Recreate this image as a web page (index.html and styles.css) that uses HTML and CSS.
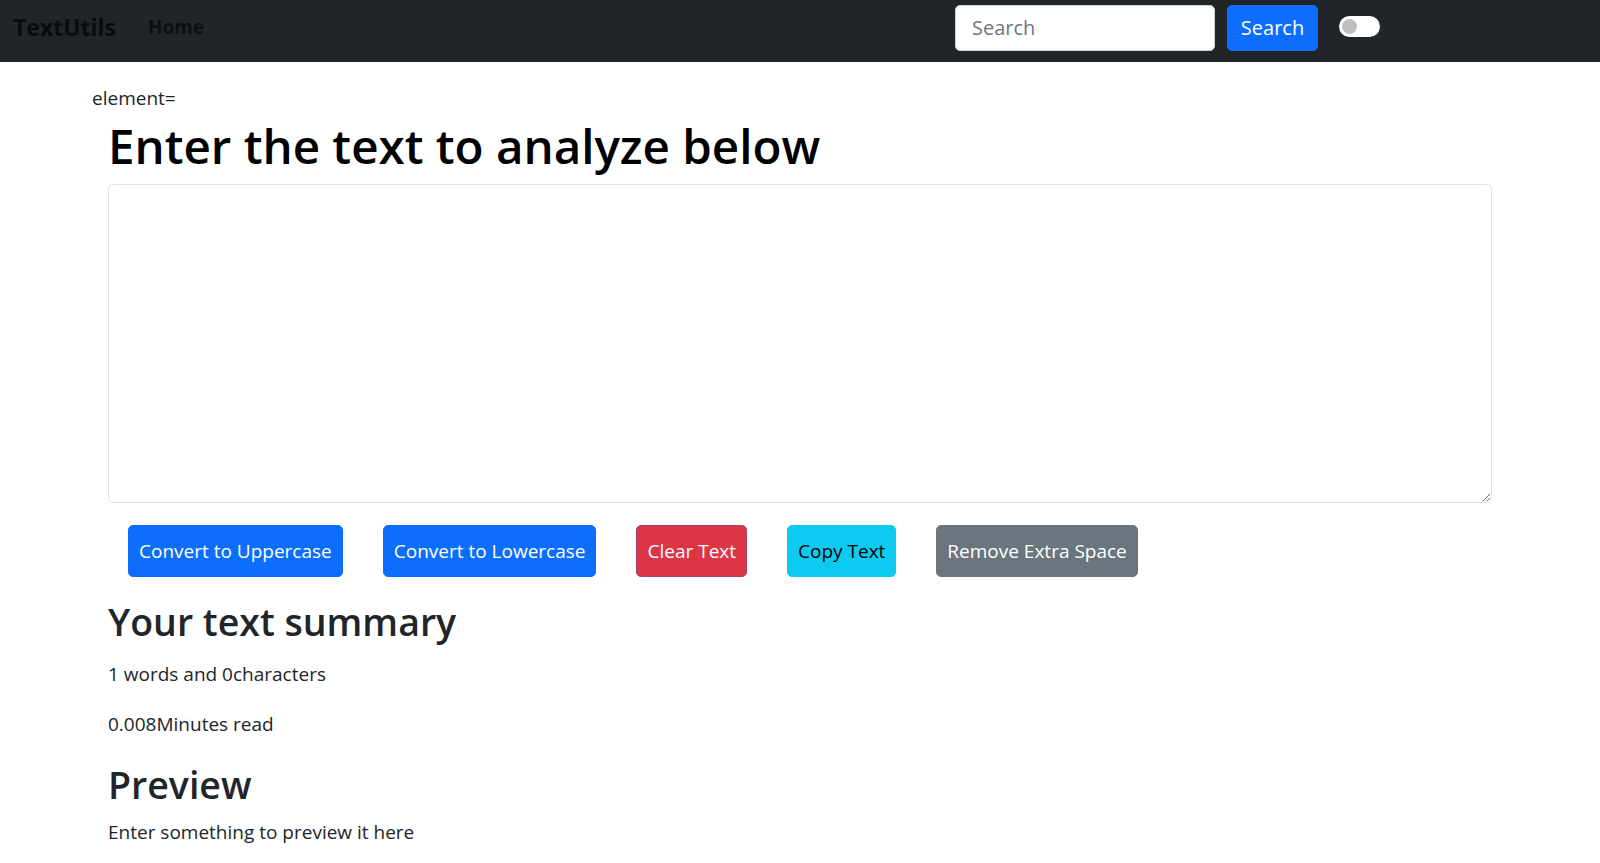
FILE: index.html
```html
<!DOCTYPE html>
<html lang="en">
<head>
    <meta charset="UTF-8">
    <meta name="viewport" content="width=device-width, initial-scale=1.0">
    <title>TextUtils</title>
    <link rel="stylesheet" href="styles.css">
</head>
<body>
    <nav class="navbar">
        <a class="brand" href="#">TextUtils</a>
        <a class="nav-link" href="#">Home</a>
        <div class="nav-right">
            <form class="search">
                <input type="search" placeholder="Search">
                <button type="button" class="btn btn-primary">Search</button>
            </form>
            <div class="switch"><span class="knob"></span></div>
        </div>
    </nav>
    <main class="container">
        <p class="element">element=</p>
        <h1>Enter the text to analyze below</h1>
        <textarea id="myBox" rows="8"></textarea>
        <div class="actions">
            <button class="btn btn-primary">Convert to Uppercase</button>
            <button class="btn btn-primary">Convert to Lowercase</button>
            <button class="btn btn-danger">Clear Text</button>
            <button class="btn btn-info">Copy Text</button>
            <button class="btn btn-secondary">Remove Extra Space</button>
        </div>
        <h2 class="summary-title">Your text summary</h2>
        <p class="count">1 words and 0characters</p>
        <p class="count">0.008Minutes read</p>
        <h2 class="preview-title">Preview</h2>
        <p class="count">Enter something to preview it here</p>
    </main>
</body>
</html>
```

FILE: styles.css
```css
body {
    margin: 0;
    font-family: "Open Sans", "Noto Sans", sans-serif;
    font-size: 19px;
    line-height: 1.5;
    color: #212529;
    background: #fff;
}
.navbar {
    display: flex;
    align-items: center;
    height: 62px;
    padding: 0 13px 7px;
    background-color: #212529;
    box-sizing: border-box;
}
.brand {
    font-size: 23px;
    font-weight: 700;
    color: #0b0b0b;
    text-decoration: none;
    margin-right: 32px;
}
.nav-link {
    font-size: 19px;
    font-weight: 700;
    color: #0e0e0e;
    text-decoration: none;
}
.nav-right {
    display: flex;
    align-items: center;
    margin-left: auto;
    margin-right: 207px;
}
.search {
    display: flex;
    gap: 12px;
    margin: 0;
}
.search input {
    width: 260px;
    height: 46px;
    box-sizing: border-box;
    padding: 0 16px;
    border: 1px solid #ced4da;
    border-radius: 5px;
    font-family: inherit;
    font-size: 20px;
    color: #212529;
}
.search input::placeholder {
    color: #6c757d;
}
.search .btn {
    width: 91px;
    height: 46px;
    margin: 0;
    padding: 0;
    font-size: 20px;
}
.switch {
    width: 41px;
    height: 21px;
    margin-left: 21px;
    background: #fff;
    border-radius: 11px;
    display: flex;
    align-items: center;
    padding-left: 3px;
    box-sizing: border-box;
    margin-top: -2px;
}
.knob {
    width: 15px;
    height: 15px;
    border-radius: 50%;
    background: #bfbfbf;
}
.container {
    width: 1384px;
    margin: 0 auto;
}
.element {
    margin: 22px 0 0 -16px;
    font-size: 19px;
}
h1 {
    margin: 2px 0 7px;
    font-size: 47.5px;
    font-weight: 600;
    line-height: 62px;
    color: #000;
}
textarea {
    display: block;
    width: 100%;
    height: 319px;
    box-sizing: border-box;
    border: 1px solid #dee2e6;
    border-radius: 5px;
    padding: 8px 15px;
    font-family: inherit;
    font-size: 19px;
}
.actions {
    display: flex;
    margin-top: 22px;
}
.btn {
    height: 52px;
    margin: 0 20px;
    padding: 0 10px;
    border: 1px solid transparent;
    border-radius: 5px;
    font-family: inherit;
    font-size: 19px;
    cursor: pointer;
    color: #fff;
}
.btn-primary {
    background-color: #0d6efd;
    border-color: #0d6efd;
}
.btn-danger {
    background-color: #dc3545;
    border-color: #a5407a;
}
.btn-info {
    background-color: #0dcaf0;
    border-color: #0dcaf0;
    color: #000;
}
.btn-secondary {
    background-color: #6c757d;
    border-color: #6c757d;
}
h2 {
    font-size: 37.5px;
    font-weight: 600;
    line-height: 48px;
}
.summary-title {
    margin: 21px 0 14px;
}
.preview-title {
    margin: 20px 0 9px;
}
.count {
    margin: 0 0 22px;
}
```
